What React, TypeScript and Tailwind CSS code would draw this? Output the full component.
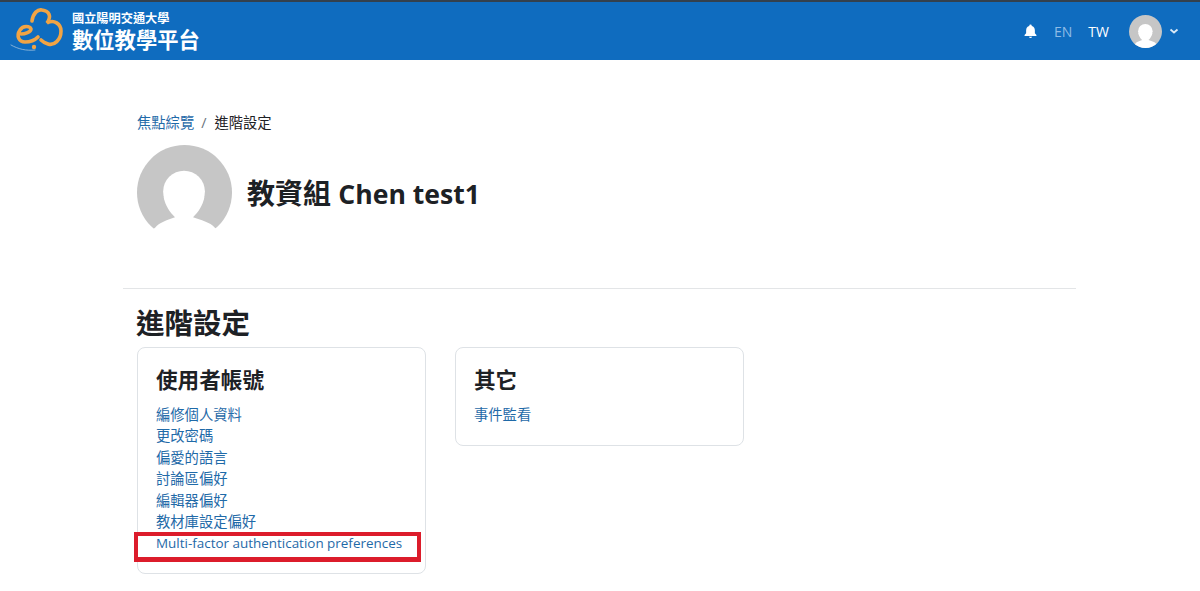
const cjk = { fontFamily: '"Open Sans", "Noto Sans CJK TC", sans-serif' };

function Logo() {
  return (
    <svg width="60" height="52" viewBox="0 1 60 52" fill="none" stroke="#f2a444" strokeLinecap="round" className="shrink-0">
      <path d="M24 17 C 25 9, 30 5, 34 6 C 41 7, 44 12, 39 19 C 46 15, 53 20, 53 27 C 53 36, 46 42, 40 40 C 37 39, 35 38, 33 36" strokeWidth="3.600" />
      <path d="M13 30 C 17 30, 23 28, 23 25 C 22 22, 15 21, 12 26 C 8 32, 11 38, 17 38 C 23 38, 27 36, 30 33" strokeWidth="3.600" />
      <path d="M3 41 C 10 45, 18 47, 27 46" stroke="#9fc0dc" strokeWidth="0.800" />
      <circle cx="26" cy="43" r="2.200" fill="#f2a444" stroke="none" />
    </svg>
  );
}

function Avatar({ size }: { size: number }) {
  return (
    <svg width={size} height={size} viewBox="0 0 100 100" className="shrink-0">
      <defs>
        <clipPath id={`c${size}`}>
          <circle cx="50" cy="50" r="50" />
        </clipPath>
      </defs>
      <circle cx="50" cy="50" r="50" fill="#c6c6c6" />
      <g clipPath={size > 50 ? undefined : `url(#c${size})`} fill="#fff">
        <circle cx="49.500" cy="49" r="22" />
        <path d="M0 100 L19 87 C 24 81, 32 79, 40 76 C 34 70, 30 64, 28 55 L71 55 C 69 64, 65 70, 59 76 C 67 79, 77 81, 82 87 L100 100 Z" />
      </g>
    </svg>
  );
}

const links = ['編修個人資料', '更改密碼', '偏愛的語言', '討論區偏好', '編輯器偏好', '教材庫設定偏好'];

export default function App() {
  return (
    <div className="relative h-[591px] w-[1200px] overflow-hidden bg-white text-[#1d2125]" style={cjk}>
      <header className="flex h-[60px] items-center border-t-2 border-[#33404d] bg-[#0f6cbf] pr-[21px] pl-[8px] text-white">
        <Logo />
        <div className="ml-[4px] flex flex-col pt-[3px]">
          <span className="text-[12.200px] leading-[15px] font-bold">國立陽明交通大學</span>
          <span className="text-[21.300px] leading-[28px] font-bold">數位教學平台</span>
        </div>
        <div className="ml-auto flex items-center">
          <svg width="15" height="16" viewBox="0 0 24 24" fill="#fff">
            <path d="M12 1.500a2 2 0 0 0-2 2v.6C6.900 5 5 7.700 5 11v4.500L2.500 18.500V20h19v-1.500L19 15.500V11c0-3.300-1.900-6-5-6.900v-.6a2 2 0 0 0-2-2Z" />
            <path d="M9.500 21.200a2.600 2.600 0 0 0 5 0Z" />
          </svg>
          <span className="ml-[16px] text-[14px] text-[#8fbce6]">EN</span>
          <span className="ml-[16px] text-[14px] font-medium">TW</span>
          <div className="ml-[20px] flex"><Avatar size={33} /></div>
          <svg width="10" height="10" viewBox="0 0 10 10" fill="none" stroke="#dbe9f6" strokeWidth="1.800" className="ml-[7px]">
            <path d="M1.500 3.500 5 6.500l3.500-3" />
          </svg>
        </div>
      </header>

      <main className="mx-[123px] w-[953px]">
        <nav className="flex items-center pt-[53px] pl-[14px] text-[14.300px] leading-[20px]">
          <span className="text-[#1f6aa8]">焦點綜覽</span>
          <span className="mr-[8px] ml-[7px] text-[#6a737b]">/</span>
          <span>進階設定</span>
        </nav>
        <div className="mt-[12px] flex h-[144px] items-start border-b border-[#e3e5e7] pl-[14px]">
          <Avatar size={95} />
          <h1 className="mt-[30px] ml-[15px] text-[28px] leading-[36px] font-bold">
            教資組 <span className="text-[26.600px]">Chen test1</span>
          </h1>
        </div>
        <h2 className="mt-[16px] pl-[13px] text-[28.500px] leading-[36px] font-bold">進階設定</h2>
        <div className="mt-[6px] flex items-start gap-[29px] pl-[14px]">
          <section className="h-[227px] w-[289px] rounded-[8px] border border-[#dee2e6] pt-[17px] pl-[18px]">
            <h3 className="text-[21.600px] leading-[30px] font-bold">使用者帳號</h3>
            <ul className="mt-[8.500px] text-[14.300px] leading-[21.500px] text-[#1f6aa8]">
              {links.map((l) => (
                <li key={l}>{l}</li>
              ))}
              <li className="mt-[0.500px] text-[13.450px]">Multi-factor authentication preferences</li>
            </ul>
          </section>
          <section className="h-[99px] w-[289px] rounded-[8px] border border-[#dee2e6] pt-[17px] pl-[18px]">
            <h3 className="text-[21.600px] leading-[30px] font-bold">其它</h3>
            <ul className="mt-[8.500px] text-[14.300px] leading-[21.500px] text-[#1f6aa8]">
              <li>事件監看</li>
            </ul>
          </section>
        </div>
      </main>
      <div className="absolute top-[532px] left-[134px] h-[30px] w-[287px] border-x-[4px] border-t-[4px] border-b-[5px] border-[#dc1c2b]" />
    </div>
  );
}
